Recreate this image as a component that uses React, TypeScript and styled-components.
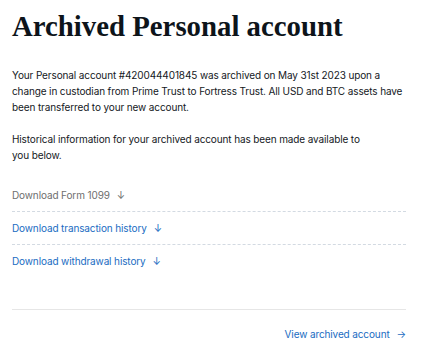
import React from 'react';
import styled, { createGlobalStyle } from 'styled-components';

const GlobalStyle = createGlobalStyle`
  body {
    margin: 0;
    background: #ffffff;
  }
`;

const Page = styled.div`
  padding: 9px 19px 0 12px;
  font-family: Inter, 'Noto Sans', sans-serif;
  color: #14181d;
`;

const Title = styled.h1`
  margin: 0 0 24px;
  font-family: 'Liberation Serif', 'DejaVu Serif', serif;
  font-weight: 700;
  font-size: 28.8px;
  line-height: 34px;
  color: #0d141a;
`;

const Paragraph = styled.p`
  margin: 0 0 16px;
  font-size: 10px;
  line-height: 16px;
  letter-spacing: -0.12px;
`;

const LinkList = styled.div`
  display: flex;
  flex-direction: column;
`;

const LinkRow = styled.div<{ last?: boolean }>`
  display: flex;
  align-items: center;
  height: 16px;
  padding: 8px 0;
  border-bottom: ${({ last }) => (last ? 'none' : '1px dashed #d3dae2')};
`;

const DownloadLink = styled.a<{ muted?: boolean }>`
  font-size: 10px;
  line-height: 16px;
  letter-spacing: -0.12px;
  color: ${({ muted }) => (muted ? '#6e6e6e' : '#1a6cc2')};
  text-decoration: none;
  display: inline-flex;
  align-items: center;
  gap: 7px;
`;

const Arrow = styled.span`
  font-size: 10px;
  line-height: 16px;
`;

const Footer = styled.div`
  margin-top: 32px;
  border-top: 1px solid #e6e6e6;
  padding-top: 16px;
  display: flex;
  justify-content: flex-end;
`;

const links = [
  { label: 'Download Form 1099', muted: true },
  { label: 'Download transaction history', muted: false },
  { label: 'Download withdrawal history', muted: false },
];

const App = () => (
  <Page>
    <GlobalStyle />
    <Title>Archived Personal account</Title>
    <Paragraph>
      Your Personal account #420044401845 was archived on May 31st 2023 upon a
      change in custodian from Prime Trust to Fortress Trust. All USD and BTC
      assets have been transferred to your new account.
    </Paragraph>
    <Paragraph>
      Historical information for your archived account has been made available to
      <br />
      you below.
    </Paragraph>
    <LinkList>
      {links.map((item, i) => (
        <LinkRow key={item.label} last={i === links.length - 1}>
          <DownloadLink href="#" muted={item.muted}>
            {item.label}
            <Arrow>↓</Arrow>
          </DownloadLink>
        </LinkRow>
      ))}
    </LinkList>
    <Footer>
      <DownloadLink href="#">
        View archived account
        <Arrow>→</Arrow>
      </DownloadLink>
    </Footer>
  </Page>
);

export default App;
